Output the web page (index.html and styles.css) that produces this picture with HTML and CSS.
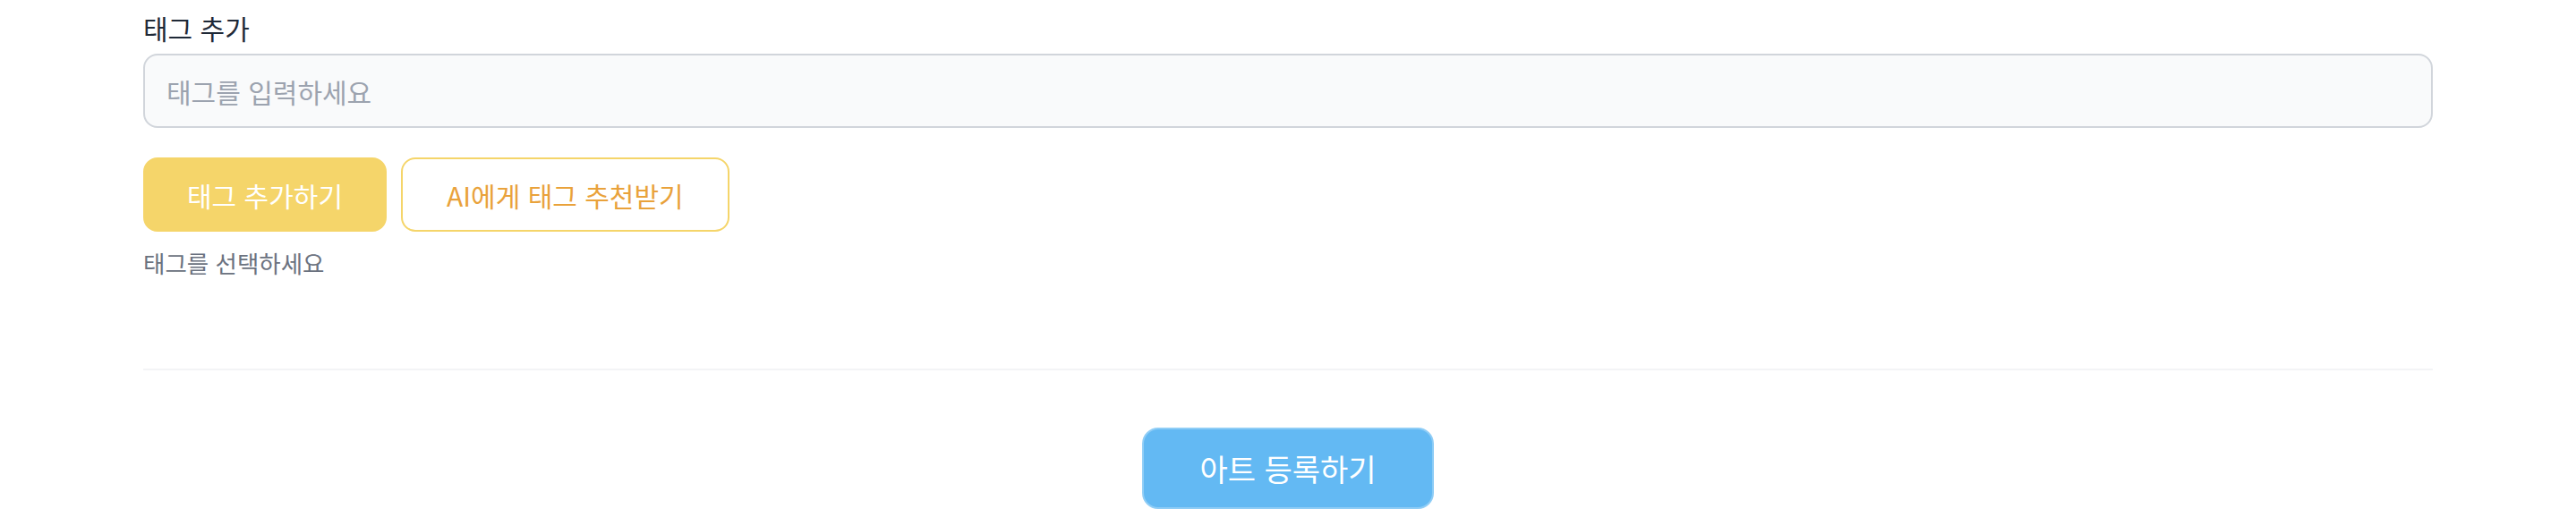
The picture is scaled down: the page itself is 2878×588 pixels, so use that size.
FILE: index.html
```html
<!DOCTYPE html>
<html lang="ko">
<head>
<meta charset="utf-8">
<link rel="stylesheet" href="styles.css">
</head>
<body>
<div class="page">
  <section class="tag-section">
    <label class="field-label" for="tag">태그 추가</label>
    <input id="tag" class="tag-input" type="text" placeholder="태그를 입력하세요">
    <div class="btn-row">
      <button class="btn btn-fill">태그 추가하기</button>
      <button class="btn btn-outline">AI에게 태그 추천받기</button>
    </div>
    <p class="hint">태그를 선택하세요</p>
  </section>
  <hr class="divider">
  <div class="submit-row">
    <button class="submit">아트 등록하기</button>
  </div>
</div>
</body>
</html>
```

FILE: styles.css
```css
* { box-sizing: border-box; }
html, body { margin: 0; padding: 0; background: #ffffff; }
body {
  font-family: "Noto Sans CJK KR", "Noto Sans", sans-serif;
  color: #1f2937;
}
.page { padding: 0 160px; }
.tag-section { display: flex; flex-direction: column; }
.field-label {
  display: block;
  font-size: 30px;
  font-weight: 400;
  line-height: 40px;
  padding-top: 11px;
  margin-bottom: 9px;
  color: #1f2937;
}
.tag-input {
  width: 100%;
  height: 83px;
  border: 2px solid #d1d5db;
  border-radius: 16px;
  background: #f9fafb;
  padding: 0 24px;
  font-family: inherit;
  font-size: 30px;
  color: #111827;
  outline: none;
}
.tag-input::placeholder { color: #9ca3af; }
.btn-row { display: flex; gap: 16px; margin-top: 33px; }
.btn {
  height: 83px;
  padding: 0 47px;
  border-radius: 16px;
  font-family: inherit;
  font-size: 30px;
  cursor: pointer;
}
.btn-fill { background: #f5d56a; border: 2px solid #f5d56a; color: #ffffff; }
.btn-outline { background: #ffffff; border: 2px solid #f5d56a; color: #e9a23b; padding: 0 49px; }
.hint {
  margin: 18px 0 0;
  font-size: 26.5px;
  line-height: 34px;
  color: #6b7280;
}
.divider {
  border: 0;
  height: 2px;
  background: #f3f4f6;
  margin: 101px 0 0;
}
.submit-row { display: flex; justify-content: center; padding-top: 64px; }
.submit {
  width: 326px;
  height: 91px;
  border-radius: 18px;
  background: #63b9f3;
  border: 2px solid #8fcdf6;
  color: #ffffff;
  font-family: inherit;
  font-size: 34px;
  cursor: pointer;
}
```
